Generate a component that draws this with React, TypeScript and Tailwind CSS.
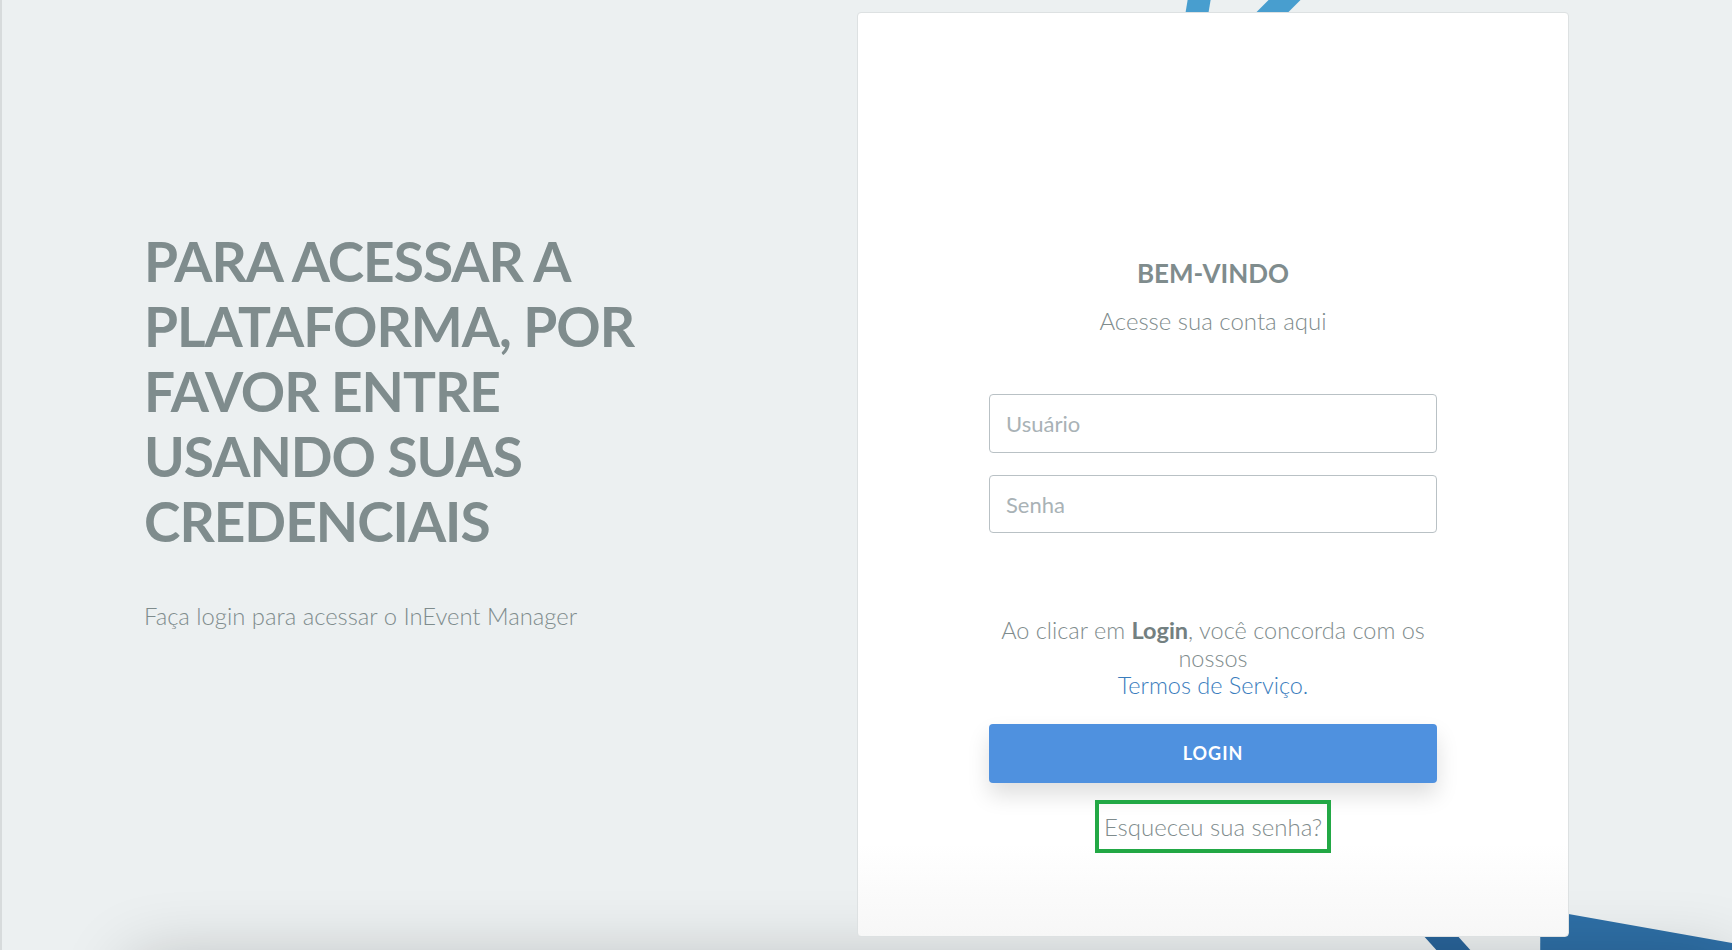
const Stripes = () => (
  <svg
    className="pointer-events-none absolute inset-0 h-full w-full"
    viewBox="0 0 1732 950"
    preserveAspectRatio="none"
    aria-hidden
  >
    <polygon points="1187,0 1210,0 1206,24 1183,24" fill="#489ecf" />
    <polygon points="1268,0 1300,0 1276,24 1244,24" fill="#489ecf" />
    <polygon points="1540,909 1732,943 1732,950 1540,950" fill="#2e6fa6" />
    <polygon points="1409,920 1443,920 1470,950 1436,950" fill="#29649a" />
  </svg>
);

const LoginCard = () => (
  <div className="relative z-10 mt-[12px] mr-[163px] flex h-[925px] w-[712px] shrink-0 flex-col items-center rounded-[4px] border border-[#dde1e2] bg-linear-to-b from-white from-90% to-[#f7f7f7] pt-[245px]">
    <h2 className="text-[26px] leading-[30px] font-bold text-[#7f8c8d]">BEM-VINDO</h2>
    <p className="mt-[18px] text-[24px] leading-[30px] font-light text-[#7f8c8d]">
      Acesse sua conta aqui
    </p>

    <form className="mt-[58px] flex w-[448px] flex-col items-center" onSubmit={(e) => e.preventDefault()}>
      <input
        type="text"
        placeholder="Usuário"
        className="h-[59px] w-full rounded-[4px] border border-[#b9c1c5] bg-white px-4 text-[22px] text-[#7f8c8d] outline-none placeholder:text-[#a9b2b6]"
      />
      <input
        type="password"
        placeholder="Senha"
        className="mt-[22px] h-[58px] w-full rounded-[4px] border border-[#b9c1c5] bg-white px-4 text-[22px] text-[#7f8c8d] outline-none placeholder:text-[#a9b2b6]"
      />

      <p className="mt-[84px] w-full text-center text-[23.5px] leading-[27.5px] font-light text-[#7f8c8d]">
        Ao clicar em <span className="font-bold text-[#738081]">Login</span>, você concorda com os nossos
        <br />
        <a href="#" className="text-[#3a7dbd]">
          Termos de Serviço.
        </a>
      </p>

      <button
        type="submit"
        className="mt-[24px] h-[59px] w-full rounded-[4px] bg-[#4f91df] text-[18px] font-bold tracking-[1px] text-white shadow-[0_12px_22px_rgba(0,0,0,0.13)]"
      >
        LOGIN
      </button>

      <a
        href="#"
        className="mt-[17px] border-4 border-[#22a845] px-[5px] text-[24px] leading-[45px] font-light text-[#7f8c8d]"
      >
        Esqueceu sua senha?
      </a>
    </form>
  </div>
);

export default function App() {
  return (
    <div className="relative h-[950px] w-full overflow-hidden border-l-2 border-[#d7dbdc] bg-[#ecf0f1] font-['Lato',sans-serif]">
      <Stripes />
      <div className="pointer-events-none absolute top-[962px] right-0 left-[130px] h-[100px] shadow-[0_0_70px_rgba(0,0,0,0.24)]" />

      <div className="relative flex h-full">
        <section className="flex-1 pt-[229px] pl-[142px]">
          <h1 className="w-[530px] text-[55px] leading-[65px] font-bold tracking-[-1px] text-[#7f8c8d]">
            PARA ACESSAR A PLATAFORMA, POR FAVOR ENTRE USANDO SUAS CREDENCIAIS
          </h1>
          <p className="mt-[47px] text-[23.8px] leading-[30px] font-light text-[#7f8c8d]">
            Faça login para acessar o InEvent Manager
          </p>
        </section>

        <LoginCard />
      </div>
    </div>
  );
}
